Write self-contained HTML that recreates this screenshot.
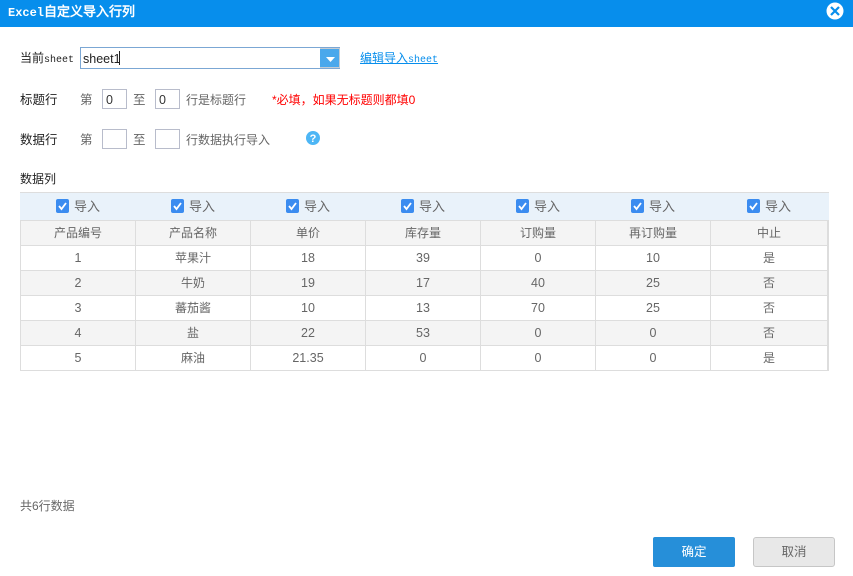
<!DOCTYPE html>
<html lang="zh">
<head>
<meta charset="utf-8">
<title>Excel自定义导入行列</title>
<style>
html,body{margin:0;padding:0;background:#fff;}
body{position:relative;width:853px;height:576px;overflow:hidden;font-family:"Liberation Sans","WenQuanYi Zen Hei","Noto Sans CJK SC",sans-serif;font-size:12px;color:#666;}
.a{position:absolute;white-space:nowrap;line-height:16px;}
.k{color:#222;}
.m{font-family:"Liberation Mono","WenQuanYi Zen Hei",monospace;font-size:10px;}
.box{position:absolute;width:23px;height:18px;border:1px solid #b8bccb;background:#fff;color:#333;line-height:20px;text-indent:3px;font-size:12.5px;}
.c{position:absolute;text-align:center;width:116px;line-height:27px;height:25px;font-size:12px;color:#666;}
.n{font-size:12.5px;}
.h{position:absolute;background:#ddd;}
.cb{position:absolute;width:13px;height:14px;border-radius:2px;background:#3b8cf0;top:199px;}
.cb svg{display:block;}
.imp{position:absolute;top:199px;line-height:16px;font-size:13px;color:#666;white-space:nowrap;}
</style>
</head>
<body>
<div style="position:absolute;left:0;top:0;width:853px;height:27px;background:#078eec;"></div>
<div class="a" style="left:8px;top:4px;color:#fff;font-weight:bold;line-height:18px;font-family:'Liberation Mono','WenQuanYi Zen Hei',monospace;font-size:12px;">Excel<span style="font-size:13px;">自定义导入行列</span></div>
<svg style="position:absolute;left:826px;top:2px;" width="18" height="18" viewBox="0 0 18 18"><circle cx="9" cy="9" r="8.5" fill="#fff"/><path d="M5 5L13 13M13 5L5 13" stroke="#078eec" stroke-width="2.2" fill="none"/></svg>

<div class="a k" style="left:20px;top:50px;">当前<span class="m">sheet</span></div>
<div style="position:absolute;left:80px;top:47px;width:258px;height:20px;border:1px solid #7ba7d4;background:#fff;"></div>
<div class="a" style="left:83px;top:51px;color:#222;font-size:12.5px;">sheet1</div>
<div style="position:absolute;left:119px;top:51px;width:1px;height:14px;background:#222;"></div>
<div style="position:absolute;left:320px;top:48px;width:20px;height:20px;background:#4aa8ec;border-right:1px solid #c4ccd4;border-top:1px solid #c4ccd4;border-bottom:1px solid #c4ccd4;box-sizing:border-box;"></div>
<svg style="position:absolute;left:325.5px;top:56.5px;" width="10" height="6" viewBox="0 0 10 6"><path d="M0 0H9L4.5 5Z" fill="#fff"/></svg>
<div class="a" style="left:360px;top:50px;color:#078eec;text-decoration:underline;">编辑导入<span class="m">sheet</span></div>

<div class="a k" style="left:20px;top:92px;font-size:12.5px;">标题行</div>
<div class="a" style="left:80px;top:92px;font-size:12.5px;">第</div>
<div class="box" style="left:102px;top:89px;">0</div>
<div class="a" style="left:133px;top:92px;font-size:12.5px;">至</div>
<div class="box" style="left:155px;top:89px;">0</div>
<div class="a" style="left:186px;top:92px;font-size:12px;">行是标题行</div>
<div class="a" style="left:272px;top:92px;color:#f00;font-size:12px;">*必填，如果无标题则都填0</div>

<div class="a k" style="left:20px;top:132px;font-size:12.5px;">数据行</div>
<div class="a" style="left:80px;top:132px;font-size:12.5px;">第</div>
<div class="box" style="left:102px;top:129px;"></div>
<div class="a" style="left:133px;top:132px;font-size:12.5px;">至</div>
<div class="box" style="left:155px;top:129px;"></div>
<div class="a" style="left:186px;top:132px;font-size:12px;">行数据执行导入</div>
<svg style="position:absolute;left:306px;top:131px;" width="14" height="14" viewBox="0 0 14 14"><circle cx="7" cy="7" r="7" fill="#4db6f5"/><text x="7" y="11" text-anchor="middle" font-family="Liberation Sans" font-weight="bold" font-size="11" fill="#fff">?</text></svg>

<div class="a k" style="left:20px;top:171px;font-size:12px;">数据列</div>

<div style="position:absolute;left:20px;top:193px;width:809px;height:27px;background:#e9f2fa;"></div>
<div style="position:absolute;left:21px;top:221px;width:806px;height:24px;background:#f4f4f4;"></div>
<div style="position:absolute;left:21px;top:271px;width:806px;height:24px;background:#f4f4f4;"></div>
<div style="position:absolute;left:21px;top:321px;width:806px;height:24px;background:#f4f4f4;"></div>

<div class="h" style="left:20px;top:192px;width:809px;height:1px;"></div>
<div class="h" style="left:20px;top:220px;width:809px;height:1px;"></div>
<div class="h" style="left:20px;top:245px;width:809px;height:1px;"></div>
<div class="h" style="left:20px;top:270px;width:809px;height:1px;"></div>
<div class="h" style="left:20px;top:295px;width:809px;height:1px;"></div>
<div class="h" style="left:20px;top:320px;width:809px;height:1px;"></div>
<div class="h" style="left:20px;top:345px;width:809px;height:1px;"></div>
<div class="h" style="left:20px;top:370px;width:809px;height:1px;"></div>
<div class="h" style="left:20px;top:220px;width:1px;height:151px;"></div>
<div class="h" style="left:135px;top:220px;width:1px;height:151px;"></div>
<div class="h" style="left:250px;top:220px;width:1px;height:151px;"></div>
<div class="h" style="left:365px;top:220px;width:1px;height:151px;"></div>
<div class="h" style="left:480px;top:220px;width:1px;height:151px;"></div>
<div class="h" style="left:595px;top:220px;width:1px;height:151px;"></div>
<div class="h" style="left:710px;top:220px;width:1px;height:151px;"></div>
<div class="h" style="left:827px;top:220px;width:2px;height:151px;"></div>

<div class="cb" style="left:56px;"><svg width="13" height="14" viewBox="0 0 13 14"><path d="M3 7L5.5 10L10 4" stroke="#fff" stroke-width="1.8" fill="none"/></svg></div><div class="imp" style="left:74px;">导入</div>
<div class="cb" style="left:171px;"><svg width="13" height="14" viewBox="0 0 13 14"><path d="M3 7L5.5 10L10 4" stroke="#fff" stroke-width="1.8" fill="none"/></svg></div><div class="imp" style="left:189px;">导入</div>
<div class="cb" style="left:286px;"><svg width="13" height="14" viewBox="0 0 13 14"><path d="M3 7L5.5 10L10 4" stroke="#fff" stroke-width="1.8" fill="none"/></svg></div><div class="imp" style="left:304px;">导入</div>
<div class="cb" style="left:401px;"><svg width="13" height="14" viewBox="0 0 13 14"><path d="M3 7L5.5 10L10 4" stroke="#fff" stroke-width="1.8" fill="none"/></svg></div><div class="imp" style="left:419px;">导入</div>
<div class="cb" style="left:516px;"><svg width="13" height="14" viewBox="0 0 13 14"><path d="M3 7L5.5 10L10 4" stroke="#fff" stroke-width="1.8" fill="none"/></svg></div><div class="imp" style="left:534px;">导入</div>
<div class="cb" style="left:631px;"><svg width="13" height="14" viewBox="0 0 13 14"><path d="M3 7L5.5 10L10 4" stroke="#fff" stroke-width="1.8" fill="none"/></svg></div><div class="imp" style="left:649px;">导入</div>
<div class="cb" style="left:747px;"><svg width="13" height="14" viewBox="0 0 13 14"><path d="M3 7L5.5 10L10 4" stroke="#fff" stroke-width="1.8" fill="none"/></svg></div><div class="imp" style="left:765px;">导入</div>

<div class="c" style="left:20px;top:220px;">产品编号</div><div class="c" style="left:135px;top:220px;">产品名称</div><div class="c" style="left:250px;top:220px;">单价</div><div class="c" style="left:365px;top:220px;">库存量</div><div class="c" style="left:480px;top:220px;">订购量</div><div class="c" style="left:595px;top:220px;">再订购量</div><div class="c" style="left:711px;top:220px;">中止</div>
<div class="c n" style="left:20px;top:245px;">1</div><div class="c" style="left:135px;top:245px;">苹果汁</div><div class="c n" style="left:250px;top:245px;">18</div><div class="c n" style="left:365px;top:245px;">39</div><div class="c n" style="left:480px;top:245px;">0</div><div class="c n" style="left:595px;top:245px;">10</div><div class="c" style="left:711px;top:245px;">是</div>
<div class="c n" style="left:20px;top:270px;">2</div><div class="c" style="left:135px;top:270px;">牛奶</div><div class="c n" style="left:250px;top:270px;">19</div><div class="c n" style="left:365px;top:270px;">17</div><div class="c n" style="left:480px;top:270px;">40</div><div class="c n" style="left:595px;top:270px;">25</div><div class="c" style="left:711px;top:270px;">否</div>
<div class="c n" style="left:20px;top:295px;">3</div><div class="c" style="left:135px;top:295px;">蕃茄酱</div><div class="c n" style="left:250px;top:295px;">10</div><div class="c n" style="left:365px;top:295px;">13</div><div class="c n" style="left:480px;top:295px;">70</div><div class="c n" style="left:595px;top:295px;">25</div><div class="c" style="left:711px;top:295px;">否</div>
<div class="c n" style="left:20px;top:320px;">4</div><div class="c" style="left:135px;top:320px;">盐</div><div class="c n" style="left:250px;top:320px;">22</div><div class="c n" style="left:365px;top:320px;">53</div><div class="c n" style="left:480px;top:320px;">0</div><div class="c n" style="left:595px;top:320px;">0</div><div class="c" style="left:711px;top:320px;">否</div>
<div class="c n" style="left:20px;top:345px;">5</div><div class="c" style="left:135px;top:345px;">麻油</div><div class="c n" style="left:250px;top:345px;">21.35</div><div class="c n" style="left:365px;top:345px;">0</div><div class="c n" style="left:480px;top:345px;">0</div><div class="c n" style="left:595px;top:345px;">0</div><div class="c" style="left:711px;top:345px;">是</div>

<div class="a" style="left:20px;top:498px;">共6行数据</div>

<div style="position:absolute;left:653px;top:537px;width:82px;height:30px;background:#268fd9;border-radius:2px;color:#fff;text-align:center;line-height:30px;font-size:12.5px;">确定</div>
<div style="position:absolute;left:753px;top:537px;width:82px;height:30px;box-sizing:border-box;background:#e8e8e8;border:1px solid #c6c6c6;border-radius:3px;color:#666;text-align:center;line-height:28px;font-size:12.5px;">取消</div>
</body>
</html>
